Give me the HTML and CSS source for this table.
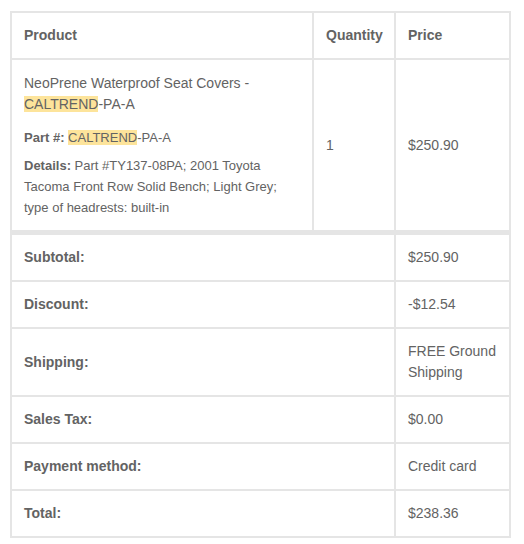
FILE: index.html
```html
<!DOCTYPE html>
<html>
<head>
<meta charset="utf-8">
<link rel="stylesheet" href="styles.css">
</head>
<body>
<table class="order">
  <thead>
    <tr>
      <th class="cell col-product">Product</th>
      <th class="cell col-qty">Quantity</th>
      <th class="cell col-price">Price</th>
    </tr>
  </thead>
  <tbody>
    <tr>
      <td class="cell item">
        <div class="item-name">NeoPrene Waterproof Seat Covers - <span class="hl">CALTREND</span>-PA-A</div>
        <ul class="item-meta">
          <li><strong>Part #:</strong> <span class="hl">CALTREND</span>-PA-A</li>
          <li><strong>Details:</strong> Part #TY137-08PA; 2001 Toyota Tacoma Front Row Solid Bench; Light Grey; type of headrests: built-in</li>
        </ul>
      </td>
      <td class="cell mid">1</td>
      <td class="cell mid">$250.90</td>
    </tr>
  </tbody>
  <tfoot>
    <tr class="first">
      <th class="cell label" colspan="2">Subtotal:</th>
      <td class="cell">$250.90</td>
    </tr>
    <tr>
      <th class="cell label" colspan="2">Discount:</th>
      <td class="cell">-$12.54</td>
    </tr>
    <tr>
      <th class="cell label" colspan="2">Shipping:</th>
      <td class="cell">FREE Ground Shipping</td>
    </tr>
    <tr>
      <th class="cell label" colspan="2">Sales Tax:</th>
      <td class="cell">$0.00</td>
    </tr>
    <tr>
      <th class="cell label" colspan="2">Payment method:</th>
      <td class="cell">Credit card</td>
    </tr>
    <tr>
      <th class="cell label" colspan="2">Total:</th>
      <td class="cell">$238.36</td>
    </tr>
  </tfoot>
</table>
</body>
</html>
```

FILE: styles.css
```css
html, body {
  margin: 0;
  padding: 0;
  background: #ffffff;
}

body {
  padding: 11px 0 0 10px;
  font-family: "Liberation Sans", Arial, Helvetica, sans-serif;
  font-size: 14px;
  line-height: 21px;
  color: #636363;
}

.order {
  width: 501px;
  table-layout: fixed;
  border-collapse: separate;
  border-spacing: 0;
  border: 1px solid #e5e5e5;
  color: #636363;
}

.cell {
  box-sizing: border-box;
  border: 1px solid #e5e5e5;
  padding: 12px;
  text-align: left;
  vertical-align: middle;
  font-size: 14px;
  line-height: 21px;
}

th.cell {
  font-weight: bold;
}

.col-product { width: 302px; }
.col-qty { width: 82px; }
.col-price { width: 115px; }

.cell.item {
  padding: 13px 12px 12px;
}

.item-name {
  margin: 0;
}

.item-meta {
  list-style: none;
  margin: 12px 0 0;
  padding: 0;
  font-size: 13px;
  line-height: 21px;
}

.item-meta li {
  margin: 0;
  padding: 0;
}

.item-meta li + li {
  margin-top: 7px;
}

.hl {
  background: #fde49b;
}

tfoot .first .cell {
  border-top-width: 4px;
}
```
